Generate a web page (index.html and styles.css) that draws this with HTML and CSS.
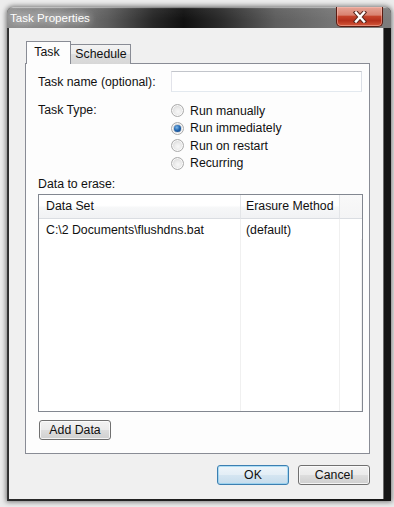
FILE: index.html
```html
<!DOCTYPE html>
<html>
<head>
<meta charset="utf-8">
<title>Task Properties</title>
<link rel="stylesheet" href="styles.css">
</head>
<body>
<div class="window">
  <div class="titlebar">
    <span class="title">Task Properties</span>
    <button class="close" aria-label="Close">
      <svg width="14" height="12" viewBox="0 0 14 12">
        <path d="M3 1.5 L11 10.5 M11 1.5 L3 10.5" stroke="#5b2a20" stroke-width="4.4" stroke-linecap="square" fill="none"/>
        <path d="M3 1.5 L11 10.5 M11 1.5 L3 10.5" stroke="#ffffff" stroke-width="2.4" stroke-linecap="square" fill="none"/>
      </svg>
    </button>
  </div>
  <div class="client">
    <div class="tabs">
      <div class="tab active">Task</div>
      <div class="tab">Schedule</div>
    </div>
    <div class="panel">
      <div class="name-row">
        <span class="label">Task name (optional):</span>
        <input class="textbox" type="text">
      </div>
      <div class="type-row">
        <span class="label type-label">Task Type:</span>
        <div class="radios">
          <div class="radio-item"><span class="radio"></span><span>Run manually</span></div>
          <div class="radio-item"><span class="radio checked"></span><span>Run immediately</span></div>
          <div class="radio-item"><span class="radio"></span><span>Run on restart</span></div>
          <div class="radio-item"><span class="radio"></span><span>Recurring</span></div>
        </div>
      </div>
      <div class="erase-label">Data to erase:</div>
      <div class="list">
        <div class="hcell">Data Set</div>
        <div class="hcell hcell-2">Erasure Method</div>
        <div class="hcell hcell-last"></div>
        <div class="cell">C:\2 Documents\flushdns.bat</div>
        <div class="cell cell-2">(default)</div>
        <div class="cell cell-last"></div>
        <div class="fill"></div>
        <div class="fill"></div>
        <div class="fill fill-last"></div>
      </div>
      <button class="btn add-btn">Add Data</button>
    </div>
    <div class="footer">
      <button class="btn btn-default">OK</button>
      <button class="btn">Cancel</button>
    </div>
  </div>
</div>
</body>
</html>
```

FILE: styles.css
```css
* {
  box-sizing: border-box;
}

html, body {
  margin: 0;
}

body {
  width: 394px;
  height: 507px;
  overflow: hidden;
  padding: 7px 3px 6px 7px;
  background: #ececec;
  font-family: "Liberation Sans", Arial, sans-serif;
  font-size: 12.3px;
  line-height: 14px;
  color: #111;
}

.window {
  width: 384px;
  height: 494px;
  display: flex;
  flex-direction: column;
  background: linear-gradient(to right, #3a3a3a 0, #2a2a2a 2px, #1c1c1c 50%, #151515 100%);
  border-radius: 6px 6px 0 0;
  box-shadow: 0 0 5px 1px rgba(0, 0, 0, 0.5);
  overflow: hidden;
}

.titlebar {
  flex: none;
  height: 21px;
  display: flex;
  justify-content: space-between;
  align-items: flex-start;
  padding-left: 3px;
  background:
    linear-gradient(to bottom, rgba(255,255,255,0.25) 0, rgba(255,255,255,0.05) 2px, rgba(0,0,0,0) 60%),
    linear-gradient(to right, #8e8e8e 0%, #828282 14%, #5e5e5e 26%, #282828 38%, #111111 46%, #2c2c2c 56%, #5e5e5e 70%, #747474 84%, #7c7c7c 100%);
  box-shadow: inset 0 1px 0 rgba(255,255,255,0.35);
}

.title {
  font-size: 11.6px;
  line-height: 21px;
  color: #fff;
  text-shadow: 0 0 6px rgba(255, 255, 255, 0.9), 0 0 12px rgba(255, 255, 255, 0.7), 0 0 2px rgba(90, 90, 90, 0.8);
}

.close {
  flex: none;
  width: 47px;
  height: 20px;
  margin: 0 8px 0 0;
  padding: 0;
  border: 1px solid #5a1c12;
  border-top: none;
  border-radius: 0 0 5px 5px;
  background: linear-gradient(to bottom, #e6a597 0%, #d98371 42%, #c4432b 50%, #b5301c 72%, #d45a3c 100%);
  box-shadow: inset 0 0 0 1px rgba(255, 200, 190, 0.45);
  display: flex;
  align-items: center;
  justify-content: center;
}

.client {
  flex: 1;
  margin: 0 8px 2px 2px;
  background: #f0f0f0;
  padding: 13px 13px 0 16px;
  display: flex;
  flex-direction: column;
  box-shadow: 1px 0 0 #6c6c6c;
}

.tabs {
  display: flex;
  align-items: flex-end;
  height: 23px;
  margin-left: 1px;
  margin-bottom: -1px;
  position: relative;
  z-index: 1;
}

.tab {
  height: 20px;
  width: 60px;
  border: 1px solid #898c95;
  border-left: none;
  border-bottom: none;
  background: linear-gradient(to bottom, #f3f3f3 0%, #ebebeb 50%, #dedede 50%, #d7d7d7 100%);
  text-align: center;
  line-height: 19px;
  padding-left: 1px;
}

.tab.active {
  height: 23px;
  width: 45px;
  border-left: 1px solid #898c95;
  background: #fdfdfd;
  line-height: 20px;
  padding-right: 4px;
}

.panel {
  width: 345px;
  background: #fdfdfd;
  border: 1px solid #898c95;
  padding: 7px 6px 13px 12px;
}

.name-row {
  display: flex;
  align-items: center;
  height: 21px;
}

.label {
  width: 133px;
  flex: none;
}

.textbox {
  width: 191px;
  height: 21px;
  margin: 0;
  border: 1px solid;
  border-color: #c2c5cb #dbdfe6 #e3e9ef #e2e3ea;
  background: #fff;
  font: inherit;
}

.type-row {
  display: flex;
  align-items: flex-start;
  margin-top: 10px;
}

.type-label {
  line-height: 17.5px;
}

.radios {
  display: flex;
  flex-direction: column;
}

.radio-item {
  display: flex;
  align-items: center;
  gap: 6px;
  height: 17.5px;
}

.radio {
  width: 13px;
  height: 13px;
  border-radius: 50%;
  border: 1px solid #ababab;
  background: radial-gradient(circle at 55% 60%, #f8f8f8 0, #ececec 35%, #d8d8d8 75%, #cacaca 100%);
  box-shadow: inset 0 0 0 1px rgba(255, 255, 255, 0.8);
  display: flex;
  align-items: center;
  justify-content: center;
}

.radio.checked::after {
  content: "";
  width: 7px;
  height: 7px;
  border-radius: 50%;
  background: radial-gradient(circle at 40% 35%, #7fb8e8 0, #1f63ad 50%, #123f78 100%);
  box-shadow: 0 0 1px #0f3e78;
}

.erase-label {
  margin-top: 5px;
}

.list {
  margin-top: 3px;
  height: 218px;
  border: 1px solid #828790;
  background: #fff;
  display: grid;
  grid-template-columns: 202px 99px 1fr;
  grid-template-rows: 24px 20px 1fr;
}

.hcell {
  border-bottom: 1px solid #dadde2;
  border-right: 1px solid #e3e5e8;
  background: linear-gradient(to bottom, #ffffff 0%, #ffffff 45%, #f6f7f8 55%, #f1f2f4 100%);
  padding-left: 7px;
  line-height: 23px;
  white-space: nowrap;
}

.hcell-2 {
  padding-left: 5px;
}

.hcell-last {
  border-right: none;
  background: linear-gradient(to bottom, #f9f9f9 0%, #f4f4f5 100%);
}

.cell {
  border-right: 1px solid #f0f0f0;
  padding: 2px 0 0 7px;
  line-height: 18px;
  white-space: nowrap;
}

.cell-2 {
  padding-left: 5px;
}

.cell-last,
.fill-last {
  border-right: none;
}

.fill {
  border-right: 1px solid #f0f0f0;
}

.btn {
  width: 72px;
  height: 20px;
  margin: 0;
  padding: 0;
  font: inherit;
  color: #111;
  border: 1px solid #707070;
  border-radius: 3px;
  background: linear-gradient(to bottom, #f2f2f2 0%, #ebebeb 48%, #dddddd 52%, #cfcfcf 100%);
  box-shadow: inset 0 0 0 1px rgba(252, 252, 252, 0.8);
}

.add-btn {
  display: block;
  margin: 8px 0 0 1px;
}

.btn-default {
  border-color: #3c7fb1;
  background: linear-gradient(to bottom, #eef5fa 0%, #e3eef6 48%, #d4e5f1 52%, #c6dcec 100%);
  box-shadow: inset 0 0 0 1px rgba(120, 200, 240, 0.55);
}

.footer {
  display: flex;
  justify-content: flex-end;
  gap: 9px;
  margin-top: 11px;
}
```
